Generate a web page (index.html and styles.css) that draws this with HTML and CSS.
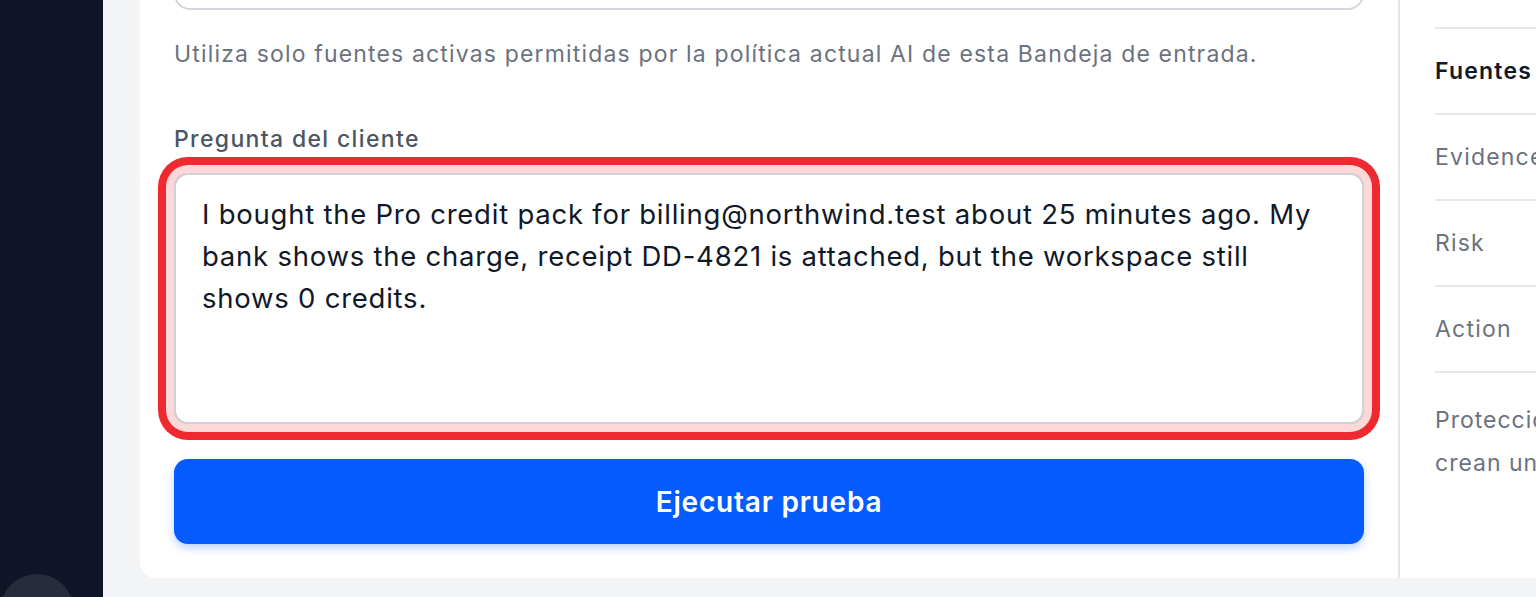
FILE: index.html
```html
<!DOCTYPE html>
<html lang="es">
<head>
<meta charset="utf-8">
<title>Prueba de AI</title>
<link rel="stylesheet" href="styles.css">
</head>
<body>
<div class="app">
  <aside class="sidebar">
    <div class="avatar"></div>
  </aside>
  <main class="content">
    <section class="card">
      <div class="main-col">
        <div class="top-input"></div>
        <p class="helper">Utiliza solo fuentes activas permitidas por la política actual AI de esta Bandeja de entrada.</p>
        <label class="field-label" for="q">Pregunta del cliente</label>
        <div class="ring">
          <textarea id="q" class="question" readonly>I bought the Pro credit pack for billing@northwind.test about 25 minutes ago. My bank shows the charge, receipt DD-4821 is attached, but the workspace still shows 0 credits.</textarea>
        </div>
        <button class="run-btn" type="button">Ejecutar prueba</button>
      </div>
      <div class="side-col">
        <div class="row row-first"></div>
        <div class="row row-active">Fuentes</div>
        <div class="row">Evidence</div>
        <div class="row">Risk</div>
        <div class="row">Action</div>
        <p class="note">Protección: estas pruebas no<br>crean una conversación real.</p>
      </div>
    </section>
  </main>
</div>
</body>
</html>
```

FILE: styles.css
```css
* { box-sizing: border-box; }
html, body {
  margin: 0;
  height: 100%;
  overflow: hidden;
}
body {
  font-family: Inter, "Noto Sans", "Liberation Sans", sans-serif;
  background: #f3f4f6;
  color: #111827;
}
.app {
  display: flex;
  height: 100vh;
}
.sidebar {
  width: 103px;
  flex: 0 0 103px;
  background: #10152a;
  display: flex;
  flex-direction: column;
  justify-content: flex-end;
}
.avatar {
  width: 74px;
  height: 74px;
  border-radius: 50%;
  background: #272b3b;
  margin-bottom: -51px;
}
.content {
  flex: 1;
  padding-left: 37px;
  min-width: 0;
}
.card {
  margin-top: -80px;
  background: #fff;
  border-radius: 16px;
  display: flex;
  width: 1500px;
  height: 658px;
}
.main-col {
  width: 1258px;
  flex: 0 0 1258px;
  padding: 34px;
  display: flex;
  flex-direction: column;
}
.top-input {
  height: 56px;
  border: 2px solid #d4d6db;
  border-radius: 16px;
}
.helper {
  margin: 28px 0 0;
  font-size: 23px;
  letter-spacing: 1.16px;
  line-height: 32px;
  color: #6b7280;
}
.field-label {
  margin-top: 53px;
  font-size: 23px;
  letter-spacing: 1.35px;
  line-height: 32px;
  font-weight: 500;
  color: #4b5563;
}
.ring {
  margin-top: 18px;
  border-radius: 14px;
  box-shadow: 0 0 0 8px #fdd8d9, 0 0 0 16px #ee2a30;
}
.question {
  display: block;
  width: 100%;
  height: 251px;
  resize: none;
  border: 2px solid #cfd2d8;
  border-radius: 14px;
  padding: 18px 40px 17px 26px;
  font-family: inherit;
  font-size: 27.5px;
  letter-spacing: 0.76px;
  line-height: 42px;
  color: #111827;
  background: #fff;
  outline: none;
  overflow: hidden;
}
.run-btn {
  margin-top: 35px;
  height: 85px;
  border: none;
  border-radius: 14px;
  background: #045cff;
  color: #fff;
  font-family: inherit;
  font-size: 28px;
  letter-spacing: 0.8px;
  font-weight: 600;
  box-shadow: 0 4px 8px rgba(4, 92, 255, 0.28);
}
.side-col {
  flex: 1;
  border-left: 2px solid #e5e7eb;
  padding-left: 35px;
}
.row {
  height: 86px;
  border-bottom: 2px solid #e5e7eb;
  display: flex;
  align-items: center;
  font-size: 23px;
  letter-spacing: 1.2px;
  color: #6b7280;
  white-space: nowrap;
}
.row-first {
  height: 109px;
}
.row-active {
  color: #111827;
  font-weight: 600;
}
.note {
  margin: 26px 0 0;
  font-size: 23px;
  letter-spacing: 1px;
  line-height: 43px;
  color: #6b7280;
  white-space: nowrap;
}
```
